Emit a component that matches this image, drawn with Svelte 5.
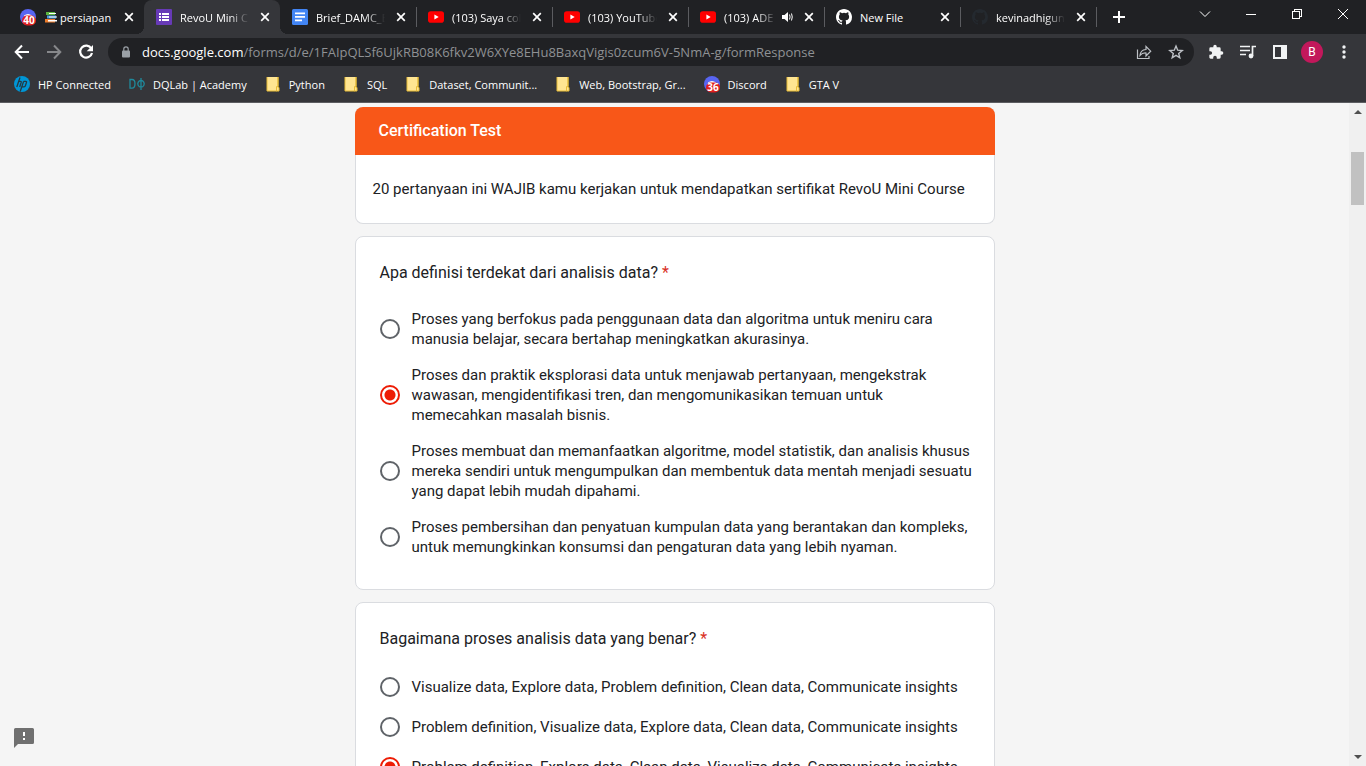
<script>
  const tabs = [
    { icon: 'discord', count: '40', title: 'persiapan', books: true },
    { icon: 'forms', title: 'RevoU Mini C', active: true, faded: true },
    { icon: 'docs', title: 'Brief_DAMC_E', faded: true },
    { icon: 'youtube', title: '(103) Saya col', faded: true },
    { icon: 'youtube', title: '(103) YouTube', faded: true },
    { icon: 'youtube', title: '(103) ADE', sound: true, faded: true },
    { icon: 'github', title: 'New File' },
    { icon: 'github', dim: true, title: 'kevinadhigun', faded: true }
  ];

  const bookmarks = [
    { icon: 'hp', title: 'HP Connected' },
    { icon: 'dq', title: 'DQLab | Academy' },
    { icon: 'folder', title: 'Python' },
    { icon: 'folder', title: 'SQL' },
    { icon: 'folder', title: 'Dataset, Communit...' },
    { icon: 'folder', title: 'Web, Bootstrap, Gr...' },
    { icon: 'discord', count: '36', title: 'Discord' },
    { icon: 'folder', title: 'GTA V' }
  ];

  let questions = $state([
    {
      title: 'Apa definisi terdekat dari analisis data?',
      answer: 1,
      options: [
        'Proses yang berfokus pada penggunaan data dan algoritma untuk meniru cara\nmanusia belajar, secara bertahap meningkatkan akurasinya.',
        'Proses dan praktik eksplorasi data untuk menjawab pertanyaan, mengekstrak\nwawasan, mengidentifikasi tren, dan mengomunikasikan temuan untuk\nmemecahkan masalah bisnis.',
        'Proses membuat dan memanfaatkan algoritme, model statistik, dan analisis khusus\nmereka sendiri untuk mengumpulkan dan membentuk data mentah menjadi sesuatu\nyang dapat lebih mudah dipahami.',
        'Proses pembersihan dan penyatuan kumpulan data yang berantakan dan kompleks,\nuntuk memungkinkan konsumsi dan pengaturan data yang lebih nyaman.'
      ]
    },
    {
      title: 'Bagaimana proses analisis data yang benar?',
      answer: 2,
      options: [
        'Visualize data, Explore data, Problem definition, Clean data, Communicate insights',
        'Problem definition, Visualize data, Explore data, Clean data, Communicate insights',
        'Problem definition, Explore data, Clean data, Visualize data, Communicate insights'
      ]
    }
  ]);
</script>

{#snippet favicon(item)}
  <svg class="favicon" viewBox="0 0 16 16" aria-hidden="true">
    {#if item.icon === 'discord'}
      <circle cx="8" cy="8" r="8" fill="#5865f2" />
      <path d="M4 6.5Q8 3.4 12 6.5L11.500 8h-7z" fill="#fff" />
      <rect x="2" y="6.500" width="14" height="10" rx="5" fill="#e01e1e" />
      <text x="9" y="15" text-anchor="middle" font-size="10" font-weight="700" fill="#fff">{item.count}</text>
    {:else if item.icon === 'forms'}
      <rect width="16" height="16" rx="1" fill="#673ab7" />
      <path d="M3 4h2v2H3zM6 4h7v2H6zM3 7h2v2H3zM6 7h7v2H6zM3 10h2v2H3zM6 10h7v2H6z" fill="#fff" />
    {:else if item.icon === 'docs'}
      <rect width="16" height="16" rx="1.500" fill="#4285f4" />
      <path d="M3 3.500h10v1.800H3zM3 7h10v1.800H3zM3 10.500h7v1.800H3z" fill="#fff" />
    {:else if item.icon === 'youtube'}
      <rect y="2.300" width="16" height="11.400" rx="2.800" fill="#f00" />
      <path d="M6.400 5.500v5L10.700 8z" fill="#fff" />
    {:else if item.icon === 'github'}
      <path fill={item.dim ? '#24292f' : '#fff'} d="M8 0C3.58 0 0 3.58 0 8c0 3.54 2.29 6.53 5.47 7.59.4.07.55-.17.55-.38 0-.19-.01-.82-.01-1.49-2.01.37-2.53-.49-2.69-.94-.09-.23-.48-.94-.82-1.13-.28-.15-.68-.52-.01-.53.63-.01 1.08.58 1.23.82.72 1.21 1.87.87 2.33.66.07-.52.28-.87.51-1.07-1.78-.2-3.64-.89-3.64-3.95 0-.87.31-1.59.82-2.15-.08-.2-.36-1.02.08-2.12 0 0 .67-.21 2.2.82a7.4 7.4 0 0 1 4 0c1.53-1.04 2.2-.82 2.2-.82.44 1.1.16 1.92.08 2.12.51.56.82 1.27.82 2.15 0 3.07-1.87 3.75-3.65 3.95.29.25.54.73.54 1.48 0 1.07-.01 1.93-.01 2.2 0 .21.15.46.55.38A8 8 0 0 0 16 8c0-4.42-3.58-8-8-8z" />
    {:else if item.icon === 'hp'}
      <circle cx="8" cy="8" r="8" fill="#0096d6" />
      <path d="M6 1.5 2.8 11M4.8 5.4h1.7q1 0 .7 1L5.7 11M9.6 5.4 6.2 15.5M9.6 5.4h2.2q1 0 .7 1l-1.1 3.4q-.3 1-1.3 1H8.2" fill="none" stroke="#233944" stroke-width="1.3" />
    {:else if item.icon === 'dq'}
      <path d="M1 3.500h2q3 0 3 4.300t-3 4.300H1zM12 2v12M12 4.500a3.200 3.300 0 1 0 .01 0z" fill="none" stroke="#1f8a9c" stroke-width="1.300" />
    {:else}
      <path d="M2 1h11v11h1v3H2z" fill="#ffe591" />
      <path d="M2 1v14h10M13 1v9.500h-1.500V15H14v-3.500h-1z" fill="none" stroke="#e8bd38" stroke-width="1" />
    {/if}
  </svg>
{/snippet}

<div class="browser">
  <header class="chrome">
    <div class="tabstrip">
      {#each tabs as tab, i}
        <div class="tab" class:active={tab.active} class:divided={i > 2}>
          {@render favicon(tab)}
          <button class="tab-title" class:faded={tab.faded}>
            {#if tab.books}
              <svg class="books" viewBox="0 0 12 12" aria-hidden="true">
                <path d="M1 1h9v3H1z" fill="#5bb63e" /><path d="M4 2h7v1H4z" fill="#fff" />
                <path d="M2 4.500h9v3H2z" fill="#4a9bd8" /><path d="M4 5.500h8v1H4z" fill="#fff" />
                <path d="M0 8h10v3.500H0z" fill="#ef7c2a" /><path d="M3 9h9v1.500H3z" fill="#fff" />
              </svg>
            {/if}
            {tab.title}
          </button>
          {#if tab.sound}
            <svg class="sound" viewBox="0 0 12 12" aria-hidden="true">
              <path d="M1 4h2.500L7 1v10L3.500 8H1z" fill="#fff" />
              <path d="M8.500 3.500q1.200 2.500 0 5M10.500 2.500q1.500 3.500 0 7" fill="none" stroke="#fff" />
            </svg>
          {/if}
          <button class="tab-close" aria-label="Close tab">
            <svg viewBox="0 0 10 10"><path d="m1.200 1.200 7.600 7.600M8.800 1.200 1.200 8.800" stroke="#fff" stroke-width="1.700" /></svg>
          </button>
        </div>
      {/each}
      <button class="new-tab" aria-label="New tab">
        <svg viewBox="0 0 12 12"><path d="M6 0v12M0 6h12" stroke="#fff" stroke-width="2" /></svg>
      </button>
      <div class="window-buttons">
        <button aria-label="Search tabs"><svg viewBox="0 0 12 12"><path d="m1 3.500 5 5 5-5" /></svg></button>
        <button aria-label="Minimize"><svg viewBox="0 0 12 12" shape-rendering="crispEdges"><path d="M1 6.500h10" /></svg></button>
        <button aria-label="Restore"><svg viewBox="0 0 12 12" shape-rendering="crispEdges"><path d="M1.500 3.500h7v7h-7zM3.500 3V1.500h7v7H9" /></svg></button>
        <button aria-label="Close"><svg viewBox="0 0 12 12"><path d="m1 1 10 10M11 1 1 11" /></svg></button>
      </div>
    </div>

    <div class="toolbar">
      <button class="tool" aria-label="Back">
        <svg viewBox="0 0 16 16"><path d="M15 8H2M8 1.500 1.700 8 8 14.500" fill="none" stroke="#fff" stroke-width="2" /></svg>
      </button>
      <button class="tool" aria-label="Forward">
        <svg viewBox="0 0 16 16"><path d="M1 8h13M8 1.500 14.300 8 8 14.500" fill="none" stroke="#87888b" stroke-width="2" /></svg>
      </button>
      <button class="tool" aria-label="Reload">
        <svg viewBox="0 0 16 16"><path d="M13.300 4.500A6 6 0 1 0 14 9" fill="none" stroke="#fff" stroke-width="2.200" /><path d="M15 1v6.300H8.700z" fill="#fff" /></svg>
      </button>
      <div class="omnibox">
        <svg class="lock" viewBox="0 0 10 12" aria-hidden="true">
          <rect x="1" y="4.500" width="8" height="7" rx="1" fill="#9aa0a6" />
          <path d="M2.800 5V3a2.200 2.200 0 0 1 4.400 0v2" fill="none" stroke="#9aa0a6" stroke-width="1.200" />
        </svg>
        <a class="url" href="#form"><b>docs.google.com</b>/forms/d/e/1FAIpQLSf6UjkRB08K6fkv2W6XYe8EHu8BaxqVigis0zcum6V-5NmA-g/formResponse</a>
        <button class="tool" aria-label="Share">
          <svg viewBox="0 0 16 16"><path d="M1.500 5.500v9h11.500V12M4 11.500q.3-5.500 6-6v-3l4.700 4.700L10 12V9q-3.800-.3-6 2.500z" fill="none" stroke="#bdc1c6" stroke-width="1.200" /></svg>
        </button>
        <button class="tool" aria-label="Bookmark this page">
          <svg viewBox="0 0 16 16"><path d="m8 2 1.700 4.200 4.500.3-3.500 2.900 1.100 4.400L8 11.400l-3.800 2.400 1.100-4.400-3.500-2.900 4.500-.3z" fill="none" stroke="#bdc1c6" stroke-width="1.400" /></svg>
        </button>
      </div>
      <button class="tool first" aria-label="Extensions">
        <svg viewBox="0 0 24 24"><path fill="#f1f3f4" d="M20.500 11H19V7a2 2 0 0 0-2-2h-4V3.500a2.500 2.500 0 0 0-5 0V5H4a2 2 0 0 0-2 2v3.800h1.500a2.700 2.700 0 0 1 0 5.400H2V20c0 1.100.9 2 2 2h3.800v-1.500a2.700 2.700 0 0 1 5.400 0V22H17a2 2 0 0 0 2-2v-4h1.500a2.500 2.500 0 0 0 0-5z" /></svg>
      </button>
      <button class="tool" aria-label="Media controls">
        <svg viewBox="0 0 16 16"><path d="M0 2.500h10M0 6.500h10M0 10.500h6M12.500 12V2.500H16" fill="none" stroke="#f1f3f4" stroke-width="1.700" /><circle cx="11" cy="12" r="2.400" fill="#f1f3f4" /></svg>
      </button>
      <button class="tool" aria-label="Side panel">
        <svg viewBox="0 0 16 16"><path d="M1 1h14v14H1zM3 3v10h6V3z" fill="#f1f3f4" fill-rule="evenodd" /></svg>
      </button>
      <button class="tool" aria-label="Profile"><span class="avatar">B</span></button>
      <button class="tool" aria-label="Menu">
        <svg viewBox="0 0 16 16" fill="#f1f3f4"><circle cx="8" cy="3" r="1.700" /><circle cx="8" cy="8" r="1.700" /><circle cx="8" cy="13" r="1.700" /></svg>
      </button>
    </div>

    <nav class="bookmarks" aria-label="Bookmarks">
      {#each bookmarks as mark}
        <a href="#form">{@render favicon(mark)}{mark.title}</a>
      {/each}
    </nav>
  </header>

  <div class="viewport">
    <main id="form">
      <section class="card intro">
        <h1>Certification Test</h1>
        <p>20 pertanyaan ini WAJIB kamu kerjakan untuk mendapatkan sertifikat RevoU Mini Course</p>
      </section>
      {#each questions as question, q}
        <section class="card question">
          <h2 id="question-{q}">{question.title} <span class="required">*</span></h2>
          <div class="options" role="radiogroup" aria-labelledby="question-{q}">
            {#each question.options as option, o}
              <label>
                <input type="radio" name="question-{q}" value={o} bind:group={question.answer} />
                <span>{option}</span>
              </label>
            {/each}
          </div>
        </section>
      {/each}
    </main>
    <div class="scrollbar" aria-hidden="true">
      <svg viewBox="0 0 8 4"><path d="M4 0 8 4H0z" fill="#505050" /></svg>
      <div class="track"><div class="thumb"></div></div>
      <svg viewBox="0 0 8 4"><path d="M0 0h8L4 4z" fill="#505050" /></svg>
    </div>
    <button class="feedback" aria-label="Report a problem">
      <svg viewBox="0 0 20 20"><path d="M1.500 0h17A1.500 1.500 0 0 1 20 1.500v13a1.500 1.500 0 0 1-1.500 1.500H4l-4 4V1.500A1.500 1.500 0 0 1 1.500 0z" fill="#707070" /><path d="M9 4h2v4H9zM9 10h2v2H9z" fill="#fff" /></svg>
    </button>
  </div>
</div>

<style>
  :global(body) {
    margin: 0;
  }

  * {
    box-sizing: border-box;
  }

  .browser {
    display: flex;
    flex-direction: column;
    height: 100vh;
    overflow: hidden;
    font-family: "Open Sans", "Noto Sans", sans-serif;
    font-size: 11px;
    color: #fff;
  }

  button {
    display: flex;
    align-items: center;
    justify-content: center;
    padding: 0;
    border: 0;
    background: none;
    color: inherit;
    font: inherit;
  }

  a {
    color: inherit;
    text-decoration: none;
  }

  svg {
    flex: none;
    display: block;
  }

  .chrome {
    flex: none;
    background: #35363a;
    border-bottom: 1px solid #5c5d61;
  }

  .tabstrip {
    display: flex;
    height: 34px;
    padding-left: 8px;
    background: #202124;
  }

  .tab {
    position: relative;
    display: flex;
    align-items: center;
    flex: 0 1 136px;
    min-width: 0;
    padding: 0 7px 0 12px;
  }

  .tab.active {
    background: #35363a;
    border-radius: 8px 8px 0 0;
  }

  .tab.active::before,
  .tab.active::after {
    content: "";
    position: absolute;
    bottom: 0;
    width: 8px;
    height: 8px;
  }

  .tab.active::before {
    right: 100%;
    background: radial-gradient(circle at 0 0, transparent 8px, #35363a 8px);
  }

  .tab.active::after {
    left: 100%;
    background: radial-gradient(circle at 100% 0, transparent 8px, #35363a 8px);
  }

  .tab.divided,
  .new-tab {
    background: linear-gradient(#5b5c60, #5b5c60) left center / 1px 20px no-repeat;
  }

  .favicon {
    width: 16px;
    height: 16px;
    overflow: visible;
  }

  .tab-title {
    flex: 1;
    justify-content: flex-start;
    min-width: 0;
    height: 20px;
    margin-left: 8px;
    white-space: nowrap;
  }

  .tab-title.faded {
    mask-image: linear-gradient(to left, transparent 4px, #000 24px);
  }

  .books {
    width: 12px;
    height: 12px;
    margin: 0 3px 0 1px;
  }

  .sound {
    width: 12px;
    height: 12px;
    margin: 0 4px 0 0;
  }

  .tab-close {
    width: 16px;
    height: 16px;
    margin-left: 4px;
  }

  .tab-close svg {
    width: 10px;
    height: 10px;
  }

  .new-tab {
    width: 46px;
  }

  .new-tab svg {
    width: 12px;
    height: 12px;
  }

  .window-buttons {
    display: flex;
    height: 28px;
    margin-left: auto;
  }

  .window-buttons button {
    width: 46px;
  }

  .window-buttons svg {
    width: 12px;
    height: 12px;
    fill: none;
    stroke: #fff;
  }

  .toolbar {
    display: flex;
    align-items: center;
    height: 36px;
    padding: 0 6px;
  }

  .tool {
    flex: none;
    width: 32px;
    height: 28px;
  }

  .tool.first {
    margin-left: 6px;
  }

  .tool svg {
    width: 16px;
    height: 16px;
  }

  .omnibox {
    display: flex;
    align-items: center;
    flex: 1;
    min-width: 0;
    height: 28px;
    margin-left: 6px;
    padding: 0 2px 0 13px;
    border-radius: 14px;
    background: #202124;
  }

  .lock {
    width: 10px;
    height: 12px;
    margin-right: 11px;
  }

  .url {
    flex: 1;
    min-width: 0;
    overflow: hidden;
    white-space: nowrap;
    font-size: 13px;
    color: #8f9194;
  }

  .url b {
    font-weight: 400;
    color: #fff;
  }

  .avatar {
    width: 22px;
    border-radius: 50%;
    background: #c2185b;
    font: 12px/22px Roboto, sans-serif;
    text-align: center;
  }

  .bookmarks {
    display: flex;
    gap: 18px;
    height: 32px;
    padding: 0 14px 4px;
    white-space: nowrap;
  }

  .bookmarks a {
    display: flex;
    align-items: center;
    gap: 8px;
  }

  .viewport {
    position: relative;
    display: flex;
    flex: 1;
    min-height: 0;
    background: #f5f5f5;
    color: #202124;
    font-family: Roboto, sans-serif;
    font-size: 15px;
    line-height: 20px;
  }

  main {
    display: flex;
    flex-direction: column;
    gap: 12px;
    flex: 1;
    min-width: 0;
    padding: 4px 0;
    overflow: hidden;
  }

  .card {
    flex: none;
    width: 100%;
    max-width: 640px;
    margin: 0 auto;
    border: 1px solid #dadce0;
    border-radius: 8px;
    background: #fff;
  }

  .intro {
    border-top: 0;
  }

  h1,
  h2,
  p {
    margin: 0;
  }

  h1 {
    margin: 0 -1px;
    padding: 0 24px;
    border-radius: 8px 8px 0 0;
    background: #f85718;
    color: #fff;
    font-size: 16px;
    font-weight: 500;
    line-height: 48px;
  }

  .intro p {
    padding: 24px 17px;
  }

  .question {
    padding: 24px 24px 32px;
  }

  h2 {
    font-size: 16px;
    font-weight: 400;
    line-height: 24px;
  }

  .required {
    color: #d93025;
  }

  .options {
    display: flex;
    flex-direction: column;
    gap: 16px;
    margin-top: 24px;
  }

  label {
    display: flex;
    align-items: center;
    gap: 12px;
    min-height: 24px;
  }

  label span {
    white-space: pre;
  }

  input {
    flex: none;
    appearance: none;
    width: 20px;
    height: 20px;
    margin: 0;
    border: 2px solid #5f6368;
    border-radius: 50%;
  }

  input:checked {
    border-color: #ed1c05;
    background: radial-gradient(circle, #ed1c05 5px, transparent 6px);
  }

  .scrollbar {
    display: flex;
    flex-direction: column;
    align-items: center;
    flex: none;
    width: 17px;
    padding: 7px 0;
    background: #f0f0f0;
  }

  .scrollbar svg {
    width: 8px;
    height: 4px;
  }

  .track {
    flex: 1;
    align-self: stretch;
    padding: 38px 2px 0;
  }

  .thumb {
    height: 53px;
    background: #c1c1c1;
  }

  .feedback {
    position: absolute;
    bottom: 18px;
    left: 14px;
  }

  .feedback svg {
    width: 20px;
    height: 20px;
  }
</style>
